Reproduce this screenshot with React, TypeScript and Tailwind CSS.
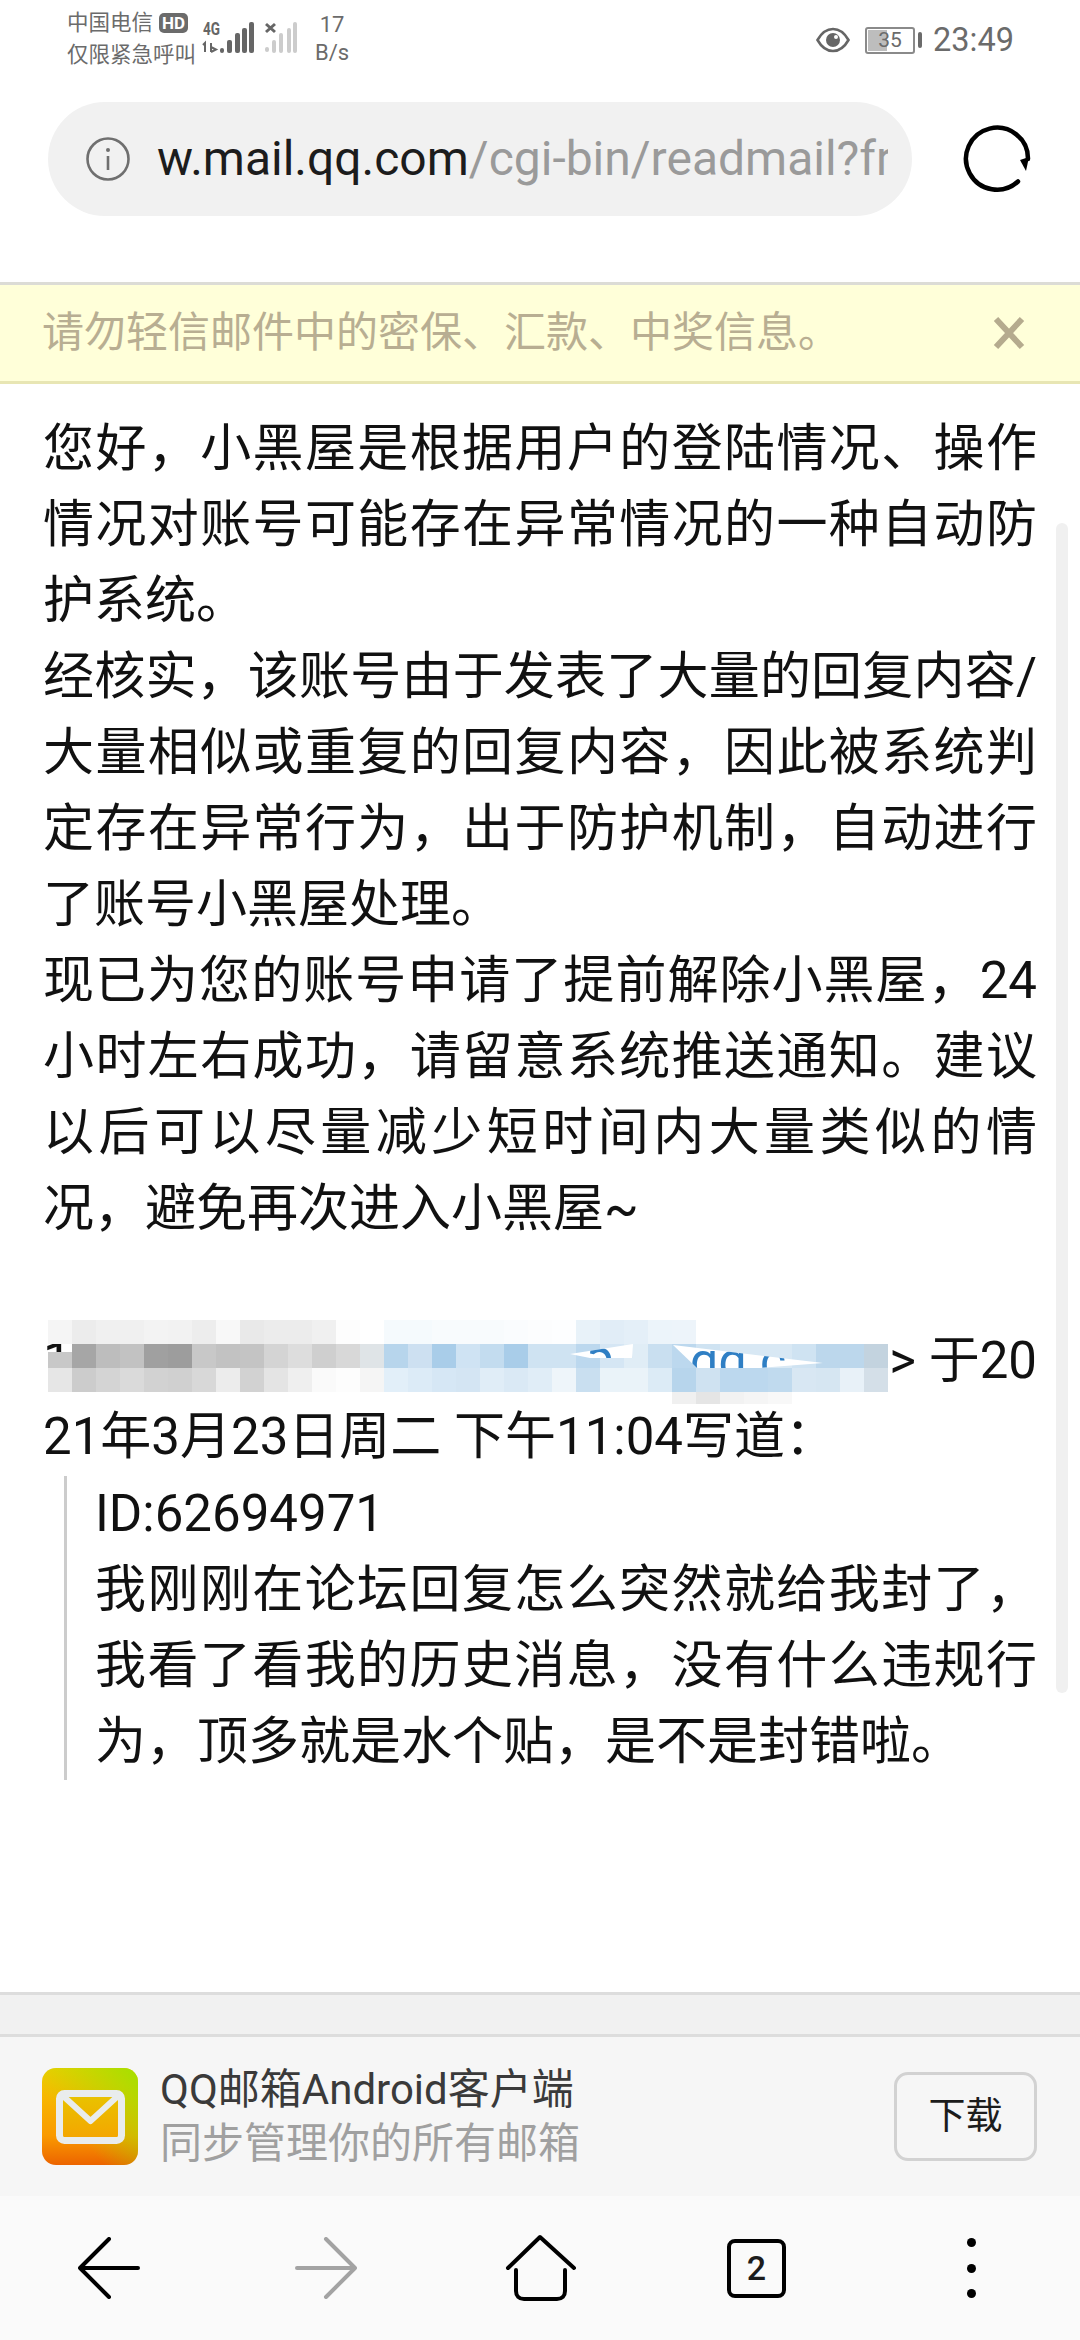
import React from 'react';

const cjk = "font-['Roboto','Noto_Sans_CJK_SC',sans-serif]";

// mosaic cells hiding the sender address, 24px wide, one list per row
const row1 = ['#f5f5f5', '#ececec', '#f0f0f0', '#f0f0f0', '#f3f3f3', '#f2f2f2', '#ededed', '#f8f8f8', '#e9e9e9', '#ececec', '#ececec', '#f0f0f0', '#fdfdfd', '#ffffff', '#f5fafd', '#f5fafd', '#f8fbfd', '#f8fbfd', '#f8fbfd', '#fafcfe', '#fcfdfe', '#fdfeff', '#e8f2f9', '#e1edf7', '#e4eff8', '#ecf4fa', '#edf4fa'];
const row2 = ['#c8c8c8', '#a6a6a6', '#bdbdbd', '#c2c2c2', '#a0a0a0', '#9d9d9d', '#c8c8c8', '#c2c2c2', '#c4c4c4', '#d4d4d4', '#dddddd', '#cfcfcf', '#d8d8d8', '#dfe4e7', '#b7d5ec', '#cde0f1', '#a9cde9', '#cfe3f3', '#c3dcef', '#a9cde9', '#cfe3f2', '#cfe3f2', '#bcd8ee', '#d5e6f4', '#e0edf6', '#c9dff0', '#bcd8ee', '#cfe3f2', '#d8e8f4', '#d8e8f4', '#d8e8f4', '#cfe3f2', '#bcd7ec', '#bcd7ec', '#c3d3df'];
const row3 = ['#e6e6e6', '#cccccc', '#d4d4d4', '#dadada', '#d2d2d2', '#d0d0d0', '#d8d8d8', '#ececec', '#d2d2d2', '#e4e4e4', '#efefef', '#fafafa', '#fdfdfd', '#f5f5f5', '#e2eff9', '#dcebf7', '#d6e7f5', '#d4e5f3', '#e0edf7', '#dae9f5', '#e0edf7', '#eef5fa', '#c9dff0', '#eaf3f9', '#eaf3f9', '#dcebf6', '#b7d5ec', '#cfe2f1', '#bcd8ee', '#bcd8ee', '#c0daee', '#d8e7f3', '#d6e6f2', '#e8f1f8', '#d4dfe8'];
const row4 = ['#f0f0f0', '#e5e5e5', '#f2f2f2', '#f5f5f5', '#f8f8f8'];

const paragraphs = [
  '您好，小黑屋是根据用户的登陆情况、操作情况对账号可能存在异常情况的一种自动防护系统。',
  '经核实，该账号由于发表了大量的回复内容/大量相似或重复的回复内容，因此被系统判定存在异常行为，出于防护机制，自动进行了账号小黑屋处理。',
  '现已为您的账号申请了提前解除小黑屋，24小时左右成功，请留意系统推送通知。建议以后可以尽量减少短时间内大量类似的情况，避免再次进入小黑屋~',
];

const quote = [
  'ID:62694971',
  '我刚刚在论坛回复怎么突然就给我封了，我看了看我的历史消息，没有什么违规行为，顶多就是水个贴，是不是封错啦。',
];

const StatusBar = () => (
  <div className="flex h-[88px] shrink-0 items-start text-[#6b6b6b]">
    <div className="ml-[67px] mt-[7px] w-[133px] text-[21.5px] leading-[32px]">
      <div className="flex items-center">
        中国电信
        <span className="ml-[6px] rounded-[5px] bg-[#6b6b6b] px-[3px] text-[17px] leading-[20px] font-bold text-white">HD</span>
      </div>
      <div className="whitespace-nowrap">仅限紧急呼叫</div>
    </div>
    <svg width="100" height="36" viewBox="0 0 100 36" className="mt-[20px]">
      <text x="3" y="15" fontSize="18" fontWeight="700" fill="#666" fontFamily="Roboto" textLength="17" lengthAdjust="spacingAndGlyphs">4G</text>
      <path d="M5 32V23L3 25M11 32V23M11 27l5 2.5-5 2.5" stroke="#666" strokeWidth="2" fill="none" />
      <rect x="20" y="28" width="4" height="5" rx="2" fill="#666" />
      <rect x="27" y="20" width="5" height="13" rx="2" fill="#666" />
      <rect x="35" y="13" width="5" height="20" rx="2" fill="#666" />
      <rect x="42" y="8" width="5" height="25" rx="2" fill="#666" />
      <rect x="49" y="2" width="5" height="31" rx="2" fill="#666" />
      <path d="M66 4l9 8M75 4l-9 8" stroke="#666" strokeWidth="3" />
      <rect x="65" y="27" width="4" height="5" rx="2" fill="#ccc" />
      <rect x="72" y="20" width="4" height="13" rx="2" fill="#ccc" />
      <rect x="79" y="13" width="4" height="20" rx="2" fill="#ccc" />
      <rect x="87" y="8" width="4" height="25" rx="2" fill="#ccc" />
      <rect x="93" y="2" width="4" height="31" rx="2" fill="#ccc" />
    </svg>
    <div className="ml-[12px] mt-[11px] w-[40px] text-center font-['Roboto',sans-serif] text-[22px] leading-[28px]">
      <div>17</div>
      <div>B/s</div>
    </div>
    <div className="ml-auto mr-[66px] mt-[24px] flex items-center">
      <svg width="34" height="26" viewBox="0 0 34 26" fill="none">
        <path d="M1.5 13C6 5 11 2 17 2s11 3 15.500 11C28 21 23 24 17 24S6 21 1.500 13z" stroke="#666" strokeWidth="2.6" />
        <circle cx="17" cy="13" r="7" fill="#666" />
        <circle cx="20" cy="10" r="2" fill="#fff" />
      </svg>
      <div className="relative ml-[15px] flex h-[27px] w-[50px] items-center justify-center overflow-hidden rounded-[3px] border-2 border-[#8a8a8a] font-['Roboto',sans-serif] text-[21px] leading-none">
        <span className="absolute inset-y-[1px] left-[1px] w-[19px] bg-[#bdbdbd]" />
        <span className="relative">35</span>
      </div>
      <span className="ml-[3px] h-[16px] w-[4px] rounded-sm bg-[#6b6b6b]" />
      <span className="ml-[11px] font-['Roboto',sans-serif] text-[32.500px] leading-none">23:49</span>
    </div>
  </div>
);

const UrlBar = () => (
  <div className="flex h-[194px] shrink-0 items-start">
    <div className="ml-[48px] mt-[14px] flex h-[114px] w-[864px] items-center rounded-full bg-[#f1f1f1]">
      <svg width="46" height="46" viewBox="0 0 46 46" fill="none" className="ml-[37px] shrink-0">
        <circle cx="23" cy="23" r="20.5" stroke="#6f6f6f" strokeWidth="2.6" />
        <circle cx="23" cy="14" r="2" fill="#6f6f6f" />
        <path d="M23 20v14" stroke="#6f6f6f" strokeWidth="2.6" />
      </svg>
      <div className="ml-[26px] w-[731px] overflow-hidden whitespace-nowrap font-['Roboto',sans-serif] text-[48px] leading-[60px] text-[#9a9a9a]">
        <span className="text-[#1c1c1c]">w.mail.qq.com</span>/cgi-bin/readmail?fromlist
      </div>
    </div>
    <svg width="70" height="70" viewBox="0 0 70 70" fill="none" className="ml-[50px] mt-[36px]">
      <path d="M56 57.500A31 31 0 1 1 66 35" stroke="#000" strokeWidth="4.500" strokeLinecap="round" />
      <path d="M58 36l9-3-3 14z" fill="#000" />
    </svg>
  </div>
);

const Notice = () => (
  <div className="flex h-[102px] shrink-0 items-center justify-between border-y-[3px] border-t-[#dcdcd6] border-b-[#e8e6b4] bg-[#ffffd9] pl-[42px] pr-[54px]">
    <span className="text-[42px] leading-none text-[#b8ae92]">请勿轻信邮件中的密保、汇款、中奖信息。</span>
    <svg width="34" height="34" viewBox="0 0 34 34">
      <path d="M4 3l26 28M30 3L4 31" stroke="#b5ab8e" strokeWidth="6" />
    </svg>
  </div>
);

const MailLogo = () => (
  <svg width="96" height="97" viewBox="0 0 96 97" className="shrink-0">
    <defs>
      <linearGradient id="logoBase" x1="0" y1="0" x2="0" y2="1">
        <stop offset="0" stopColor="#f5cc00" />
        <stop offset="0.7" stopColor="#fa9a00" />
        <stop offset="1" stopColor="#ec6400" />
      </linearGradient>
      <linearGradient id="logoGreen" x1="1" y1="0" x2="0.3" y2="0.6">
        <stop offset="0" stopColor="#a4e000" />
        <stop offset="1" stopColor="#a4e000" stopOpacity="0" />
      </linearGradient>
      <linearGradient id="logoInner" x1="0" y1="0" x2="0" y2="1">
        <stop offset="0" stopColor="#e8c400" />
        <stop offset="1" stopColor="#f5a400" />
      </linearGradient>
    </defs>
    <rect width="96" height="97" rx="14" fill="url(#logoBase)" />
    <rect width="96" height="97" rx="14" fill="url(#logoGreen)" />
    <rect x="17.500" y="25.500" width="62" height="47" rx="5" fill="url(#logoInner)" stroke="#e9ecec" strokeWidth="7" />
    <path d="M20 27l28.500 26L77 27" fill="none" stroke="#e9ecec" strokeWidth="6" strokeLinejoin="round" />
  </svg>
);

const AppBanner = () => (
  <div className="flex h-[159px] shrink-0 items-center bg-[#f6f6f6] pl-[42px]">
    <MailLogo />
    <div className="ml-[22px] w-[430px]">
      <div className="whitespace-nowrap text-[42px] leading-[54px] text-[#3a3a3a]">QQ邮箱Android客户端</div>
      <div className="whitespace-nowrap text-[42px] leading-[54px] text-[#a0a0a0]">同步管理你的所有邮箱</div>
    </div>
    <div className="ml-auto mr-[43px] flex h-[89px] w-[143px] items-center justify-center rounded-[14px] border-[3px] border-[#d2d2d2] text-[37px] leading-none text-[#1c1c1c]">
      下载
    </div>
  </div>
);

const BottomNav = () => (
  <div className="flex h-[144px] shrink-0 items-center bg-[#fafafa]">
    <svg width="62" height="62" viewBox="0 0 62 62" fill="none" stroke="#000" strokeWidth="4" strokeLinecap="round" strokeLinejoin="round" className="ml-[78px]">
      <path d="M31 2L2 31l29 29M2 31h58" />
    </svg>
    <svg width="62" height="62" viewBox="0 0 62 62" fill="none" stroke="#a3a3a3" strokeWidth="4" strokeLinecap="round" strokeLinejoin="round" className="ml-[155px]">
      <path d="M31 2l29 29-29 29M60 31H2" />
    </svg>
    <svg width="72" height="68" viewBox="0 0 72 68" fill="none" stroke="#000" strokeWidth="4" strokeLinecap="round" strokeLinejoin="round" className="ml-[148px]">
      <path d="M3 34L35 3l34 31M11 36v21c0 5 3 8 8 8h33c5 0 8-3 8-8V36" />
    </svg>
    <div className="ml-[150px] flex h-[59px] w-[59px] items-center justify-center rounded-[8px] border-[4px] border-black font-['Roboto',sans-serif] text-[34px] font-medium leading-none text-[#1c1c1c]">
      2
    </div>
    <div className="ml-[181px] flex flex-col gap-[16.5px]">
      <span className="h-[9px] w-[9px] rounded-full bg-black" />
      <span className="h-[9px] w-[9px] rounded-full bg-black" />
      <span className="h-[9px] w-[9px] rounded-full bg-black" />
    </div>
  </div>
);

const Mosaic = () => (
  <svg width="1080" height="100" viewBox="0 1310 1080 100" className="absolute left-0 top-[1310px]">
    <defs>
      <clipPath id="holeA">
        <path d="M673 1345L823 1363 760 1368H697z" />
      </clipPath>
      <clipPath id="holeB">
        <path d="M570 1354L633 1344 632 1358H590z" />
      </clipPath>
    </defs>
    {row1.map((c, i) => (
      <rect key={i} x={48 + i * 24} y={1320} width={24} height={24} fill={c} />
    ))}
    {row2.map((c, i) => (
      <rect key={i} x={48 + i * 24} y={i === 0 ? 1352 : 1344} width={24} height={i === 0 ? 16 : 24} fill={c} />
    ))}
    <path d="M673 1345L823 1363 760 1368H697z" fill="#fff" />
    <path d="M570 1354L633 1344 632 1358H590z" fill="#fff" />
    <text x="690" y="1378" fontSize="50" fill="#2f7fc4" fontFamily="Roboto" clipPath="url(#holeA)">qq.c</text>
    <text x="585" y="1372" fontSize="50" fill="#2f7fc4" fontFamily="Roboto" clipPath="url(#holeB)">5 /</text>
    {row3.map((c, i) => (
      <rect key={i} x={48 + i * 24} y={1368} width={24} height={24} fill={c} />
    ))}
    {row4.map((c, i) => (
      <rect key={i} x={672 + i * 24} y={1392} width={24} height={12} fill={c} />
    ))}
  </svg>
);

export default function App() {
  return (
    <div className={`relative flex h-[2340px] w-[1080px] flex-col overflow-hidden bg-white ${cjk}`}>
      <StatusBar />
      <UrlBar />
      <Notice />

      <div className="relative flex-1 px-[43px] pt-[27px] text-[51px] leading-[76px] text-[#111]">
        {paragraphs.map(text => (
          <p key={text} className="text-justify">{text}</p>
        ))}
        <div className="h-[76px]" />
        <div className="flex justify-between whitespace-nowrap">
          <span>1</span>
          <span>&gt; 于20</span>
        </div>
        <div className="whitespace-nowrap">21年3月23日周二 下午11:04写道：</div>
        <div className="ml-[21px] mt-[1px] border-l-[3px] border-[#cccccc] pl-[28px]">
          {quote.map(text => (
            <p key={text} className="text-justify">{text}</p>
          ))}
        </div>
        <div className="absolute right-[12px] top-[139px] h-[1170px] w-[12px] rounded-full bg-[#f0f0f0]" />
      </div>

      <Mosaic />

      <div className="h-[45px] shrink-0 border-y-[3px] border-[#dddddd] bg-[#f1f1f1]" />
      <AppBanner />
      <BottomNav />
    </div>
  );
}
